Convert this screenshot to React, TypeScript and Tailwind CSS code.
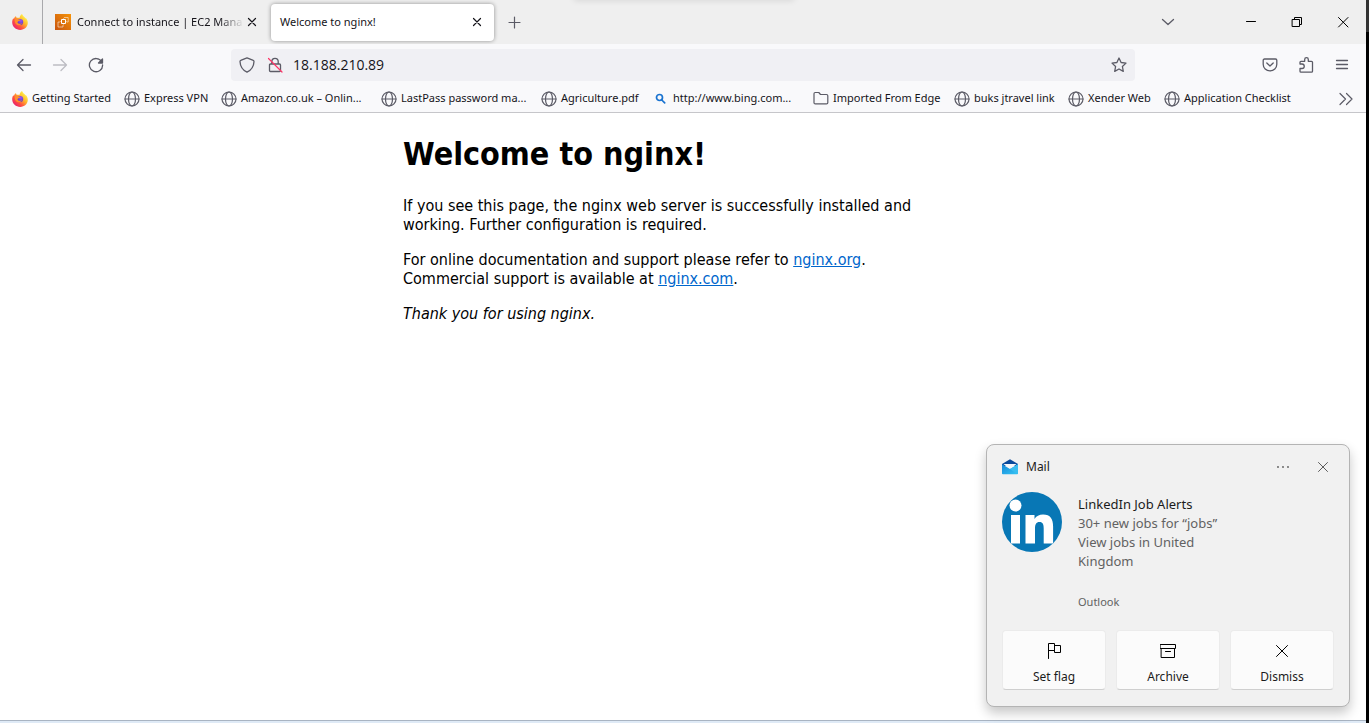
import type { ReactNode } from "react";

const UI = "font-['Noto_Sans','Open_Sans',sans-serif]";

function FirefoxLogo({ id }: { id: string }) {
  return (
    <svg viewBox="0 0 16 16" className="size-4 shrink-0" aria-hidden="true">
      <defs>
        <linearGradient id={`${id}-body`} x1="0.9" y1="0.1" x2="0.15" y2="0.9">
          <stop offset="0.1" stopColor="#fff04a" />
          <stop offset="0.4" stopColor="#ffb52a" />
          <stop offset="0.7" stopColor="#ff5240" />
          <stop offset="1" stopColor="#e9206f" />
        </linearGradient>
        <radialGradient id={`${id}-core`} cx="0.6" cy="0.3" r="0.8">
          <stop offset="0" stopColor="#9b54f5" />
          <stop offset="1" stopColor="#4a35b5" />
        </radialGradient>
      </defs>
      <path
        d="M10 0c.6 1 1 2 2.300 3 .7.5 1 1 1.200 1.500l.4-.6c1.300 1.700 2 3.400 1.900 5.200C15.600 13 12.300 16 8.200 16 3.900 16 .3 12.800.2 8.600.1 7 .5 5.200 1.500 3.900c0 .5.100.8.300 1.100C2.200 3.700 3 2.700 4 2c0 .8.2 1.300.7 1.800.9-.2 1.800-.1 2.700.3C7.700 2.600 8.600 1 10 0Z"
        fill={`url(#${id}-body)`}
      />
      <circle cx="8.100" cy="8" r="3.100" fill={`url(#${id}-core)`} />
      <path
        d="M2.800 5.600c1.200-.7 2.700-.6 3.700-.2l1.800.6c-.1.800-1 .9-2 1.200-.6.300-.4 1-.9 1.300.9 1.600 3.200 1.800 5 .5-1 2.500-4.800 2.900-6.500.9C2.900 8.800 2.500 7.300 2.800 5.600Z"
        fill="#ff8f2c"
      />
    </svg>
  );
}

function Ec2Logo() {
  return (
    <svg viewBox="0 0 16 16" className="size-4 shrink-0" aria-hidden="true">
      <defs>
        <linearGradient id="ec2" x1="0" y1="1" x2="1" y2="0">
          <stop offset="0" stopColor="#c85510" />
          <stop offset="1" stopColor="#f59308" />
        </linearGradient>
      </defs>
      <path d="M0 0h16v16H0z" fill="url(#ec2)" />
      <path d="M6.500 5.500h4v4h-4z" fill="none" stroke="#fff" strokeWidth="1" />
      <path
        d="M8.500 4.300v1.200M10.500 7.500h1.200M8.500 9.500v1.200M5.300 7.500h1.200M5 8H3v5h5v-2M9 3.500h4.200V8h-1.500"
        fill="none"
        stroke="#fff"
        strokeOpacity=".75"
        strokeWidth=".7"
      />
    </svg>
  );
}

function Line({
  children,
  color = "text-[#5b5b66]",
  width = 1.3,
}: {
  children: ReactNode;
  color?: string;
  width?: number;
}) {
  return (
    <svg
      viewBox="0 0 16 16"
      className={`size-4 ${color} shrink-0`}
      fill="none"
      stroke="currentColor"
      strokeWidth={width}
      strokeLinecap="round"
      strokeLinejoin="round"
      aria-hidden="true"
    >
      {children}
    </svg>
  );
}

function Globe() {
  return (
    <Line width={1.2}>
      <circle cx="8" cy="8" r="7" />
      <ellipse cx="8" cy="8" rx="3.500" ry="7" />
      <path d="M1 8h14" />
    </Line>
  );
}

function Folder() {
  return (
    <Line width={1.2}>
      <path d="M1 2.700c0-.8.500-1.200 1.200-1.200h3.600l1.700 2h6c.9 0 1.300.5 1.300 1.200v7c0 .8-.5 1.200-1.300 1.200H2.300C1.500 12.900 1 12.500 1 11.700Z" />
    </Line>
  );
}

function Search() {
  return (
    <Line color="text-[#1a73d0]" width={1.7}>
      <circle cx="6.500" cy="6.500" r="3" />
      <path d="m8.800 9 2.900 2.900" />
    </Line>
  );
}

const bookmarks: { label: string; icon: ReactNode; width: string }[] = [
  { label: "Getting Started", icon: <FirefoxLogo id="bm" />, width: "w-28" },
  { label: "Express VPN", icon: <Globe />, width: "w-[97px]" },
  { label: "Amazon.co.uk – Onlin...", icon: <Globe />, width: "w-40" },
  { label: "LastPass password ma...", icon: <Globe />, width: "w-40" },
  { label: "Agriculture.pdf", icon: <Globe />, width: "w-28" },
  { label: "http://www.bing.com...", icon: <Search />, width: "w-40" },
  { label: "Imported From Edge", icon: <Folder />, width: "w-[141px]" },
  { label: "buks jtravel link", icon: <Globe />, width: "w-[114px]" },
  { label: "Xender Web", icon: <Globe />, width: "w-24" },
  { label: "Application Checklist", icon: <Globe />, width: "w-36" },
];

function TabBar() {
  return (
    <div className="relative flex h-11 items-center overflow-hidden bg-[#efefef] text-[11px] text-[#15141a]">
      <div className="absolute -top-1 left-[42%] h-1 w-[220px] shadow-[0_0_6px_rgba(0,0,0,0.15)]" />
      <button className="flex h-11 w-[43px] items-center border-r border-[#a9a9ac] pl-3" aria-label="Firefox View">
        <FirefoxLogo id="view" />
      </button>
      <div className="flex w-[228px] items-center pl-3">
        <Ec2Logo />
        <button className="ml-1.5 w-[167px] mask-r-from-85% text-left whitespace-nowrap">
          Connect to instance | EC2 Mana
        </button>
        <button aria-label="Close tab">
          <Line color="text-[#15141a]" width={1.2}>
            <path d="m4.500 4.500 7 7M11.500 4.500l-7 7" />
          </Line>
        </button>
      </div>
      <div className="flex h-[37px] w-[223px] items-center justify-between rounded bg-white pr-[9px] pl-[9px] shadow-[0_0_4px_rgba(0,0,0,0.4)]">
        <button>Welcome to nginx!</button>
        <button aria-label="Close current tab">
          <Line color="text-[#15141a]" width={1.2}>
            <path d="m4.500 4.500 7 7M11.500 4.500l-7 7" />
          </Line>
        </button>
      </div>
      <button className="ml-3" aria-label="New tab">
        <Line width={1.2}>
          <path d="M8.500 3v11M3 8.500h11" />
        </Line>
      </button>
      <div className="ml-auto flex items-center pr-[15px]">
        <button className="mr-[67px]" aria-label="List all tabs">
          <Line width={1.300}>
            <path d="m2.500 5.500 5.500 5 5.500-5" />
          </Line>
        </button>
        <div className="flex items-center gap-[30px]">
          <button aria-label="Minimize">
            <Line color="text-black" width={1}>
              <path d="M3.500 7.500h9" />
            </Line>
          </button>
          <button aria-label="Restore">
            <Line color="text-black" width={1}>
              <path d="M3.500 5.500h7v7h-7zM5.500 5.500v-2h7v7h-2" />
            </Line>
          </button>
          <button aria-label="Close window">
            <Line color="text-black" width={1}>
              <path d="m3.500 3.500 9.500 9.500M13 3.500 3.500 13" />
            </Line>
          </button>
        </div>
      </div>
    </div>
  );
}

function NavBar() {
  return (
    <div className="flex h-[41px] items-center bg-[#f9f9fb]">
      <div className="flex w-[231px] gap-5 pl-4">
        <button aria-label="Back">
          <Line>
            <path d="M14.500 8H1.500M7 2.500 1.500 8 7 13.500" />
          </Line>
        </button>
        <button aria-label="Forward">
          <Line color="text-[#bdbdc3]">
            <path d="M1.500 8h13M9 2.500 14.500 8 9 13.500" />
          </Line>
        </button>
        <button aria-label="Reload">
          <Line>
            <path d="M13.700 4.800A6.600 6.600 0 1 0 14.600 8" />
            <path d="M14.500 2v4h-4z" fill="currentColor" />
          </Line>
        </button>
      </div>
      <div className="flex h-8 flex-1 items-center rounded bg-[#f0f0f4] px-2">
        <button aria-label="Tracking protection">
          <Line>
            <path d="M8 .9 14.300 3.300c.6.2.7.6.7 1.200C14.800 9.500 12.500 13 8 15.200 3.500 13 1.200 9.500 1 4.500c0-.6.1-1 .7-1.200Z" />
          </Line>
        </button>
        <button className="ml-3" aria-label="Connection is not secure">
          <Line>
            <path d="M3.500 7h9c.7 0 1 .4 1 1v5.500c0 .7-.3 1-1 1h-9c-.7 0-1-.3-1-1V8c0-.6.3-1 1-1ZM4.800 7V4.500a3.200 3.200 0 0 1 6.400 0V7" />
            <path d="m1.500 1.500 13.500 13.500" stroke="#ff3366" strokeWidth="1.200" />
          </Line>
        </button>
        <input
          aria-label="Address"
          defaultValue="18.188.210.89"
          className="ml-2.5 min-w-0 flex-1 bg-transparent font-['Open_Sans','Noto_Sans',sans-serif] text-sm text-[#15141a] outline-none"
        />
        <button aria-label="Bookmark this page">
          <Line>
            <path d="m8 1 2.100 4.500 4.900.6-3.600 3.400.9 4.900L8 12l-4.300 2.400.9-4.900L1 6.100l4.900-.6Z" />
          </Line>
        </button>
      </div>
      <div className="flex w-[231px] justify-end gap-5 pr-4">
        <button aria-label="Save to Pocket">
          <Line>
            <path d="M2.500 2h11c.8 0 1.300.5 1.300 1.300V7.200c0 3.800-3 6.600-6.800 6.600S1.200 11 1.200 7.200V3.300C1.200 2.500 1.700 2 2.500 2Z" />
            <path d="M4.800 6 8 9l3.200-3" />
          </Line>
        </button>
        <button aria-label="Extensions">
          <Line>
            <path d="M2 7V5.300c0-.6.4-1 1-1h3.700V2.500a1.800 1.800 0 0 1 3.600 0v1.800h3.200c.6 0 1 .4 1 1v8.900c0 .6-.4 1-1 1H3c-.6 0-1-.4-1-1v-2.700h2a2.200 2.200 0 0 0 0-4.500Z" />
          </Line>
        </button>
        <button aria-label="Application menu">
          <Line>
            <path d="M2.500 3.500h11M2.500 7.500h11M2.500 11.500h11" />
          </Line>
        </button>
      </div>
    </div>
  );
}

function BookmarksBar() {
  return (
    <nav className="flex h-7 items-center border-b border-[#c6c6ca] bg-[#f9f9fb] pl-3 text-[11px] text-[#15141a]">
      {bookmarks.map((b) => (
        <a key={b.label} href="#" className={`flex ${b.width} shrink-0 items-center gap-1 whitespace-nowrap`}>
          {b.icon}
          <span>{b.label}</span>
        </a>
      ))}
      <button className="mr-3 ml-auto" aria-label="More bookmarks">
        <Line width={1.200}>
          <path d="m2 2.500 5.500 5.500L2 13.500M8.500 2.500 14 8l-5.500 5.500" />
        </Line>
      </button>
    </nav>
  );
}

function Action({ label, children }: { label: string; children: ReactNode }) {
  return (
    <button className="flex h-[60px] flex-1 flex-col items-center gap-2 rounded border border-b-[#cfcfcf] border-[#ebebeb] bg-[#fbfbfb] pt-3 text-xs leading-5 text-[#1b1b1b]">
      {children}
      <span>{label}</span>
    </button>
  );
}

function MailToast() {
  return (
    <section
      aria-label="Mail notification"
      className="absolute right-4 bottom-4 w-[364px] rounded-lg border border-[#b4b4b4] bg-[#f1f1f1] px-[15px] pt-3.5 pb-4 shadow-[0_6px_12px_rgba(0,0,0,0.22)]"
    >
      <header className="flex h-4 items-center text-xs text-[#1b1b1b]">
        <svg viewBox="0 0 16 16" className="size-4" aria-hidden="true">
          <defs>
            <linearGradient id="mail" x1="0" y1="0" x2="1" y2="1">
              <stop offset="0" stopColor="#1688d8" />
              <stop offset="1" stopColor="#35c5f4" />
            </linearGradient>
          </defs>
          <path d="M0 5 8 .3 16 5v2H0z" fill="#0a4a9c" />
          <path d="M1.500 5h13L8 10.500z" fill="#f6f8fb" />
          <path d="M0 5.200 8 10l8-4.800V14.500c0 .5-.3.800-.8.800H.8c-.5 0-.8-.3-.8-.8Z" fill="url(#mail)" />
          <path d="m8 10 8-4.800V14.500L15 15Z" fill="#39bdf0" />
        </svg>
        <h2 className="ml-2">Mail</h2>
        <button className="ml-auto" aria-label="More options">
          <svg viewBox="0 0 16 16" className="size-4" fill="#5c5c5c" aria-hidden="true">
            <circle cx="3" cy="8" r=".9" />
            <circle cx="8" cy="8" r=".9" />
            <circle cx="13" cy="8" r=".9" />
          </svg>
        </button>
        <button className="mr-[3px] ml-6" aria-label="Close notification">
          <Line color="text-[#5c5c5c]" width={1}>
            <path d="m3.500 3.500 9 9M12.500 3.500l-9 9" />
          </Line>
        </button>
      </header>
      <div className="mt-[17px] flex gap-4">
        <svg viewBox="0 0 60 60" className="size-[60px]" role="img" aria-label="LinkedIn">
          <circle cx="30" cy="30" r="30" fill="#0877b5" />
          <g fill="#fff">
            <circle cx="13.500" cy="13.500" r="6" />
            <path d="M9 23h9v28.500H9zM23.500 23h9v4c1.600-3 4.700-4.600 8.600-4.600 7.400 0 10 4.600 10 12V51.500h-9.400V36.500c0-4-.8-6.500-4.200-6.500s-4.500 2.600-4.500 6.500v15h-9.500z" />
          </g>
        </svg>
        <div className="w-40 pt-[3px] text-[13px] leading-[19px] text-[#626262]">
          <h3 className="text-[#1b1b1b]">LinkedIn Job Alerts</h3>
          <p>30+ new jobs for “jobs”</p>
          <p>View jobs in United Kingdom</p>
          <p className="mt-[21px] text-[11px]">Outlook</p>
        </div>
      </div>
      <div className="mt-[19px] flex gap-2.5">
        <Action label="Set flag">
          <Line color="text-black" width={1}>
            <path d="M2.500 15.500v-15h6v7h-6M8.500 2.500h6v7h-6v-2" strokeLinejoin="miter" />
          </Line>
        </Action>
        <Action label="Archive">
          <Line color="text-black" width={1}>
            <path d="M.5 1.500h15v4H.5zM1.500 5.500h13v9h-13zM5.500 8.500h5" strokeLinejoin="miter" />
          </Line>
        </Action>
        <Action label="Dismiss">
          <Line color="text-black" width={1}>
            <path d="m2.500 2.500 11 11M13.500 2.500l-11 11" />
          </Line>
        </Action>
      </div>
    </section>
  );
}

export default function App() {
  return (
    <div className={`flex min-h-screen bg-white ${UI}`}>
      <div className="relative flex min-w-0 flex-1 flex-col">
        <TabBar />
        <NavBar />
        <BookmarksBar />
        <main className="mx-auto w-[560px] flex-1 font-['DejaVu_Sans_Condensed','DejaVu_Sans',sans-serif] text-base leading-[19px] text-black">
          <h1 className="my-[22px] text-[32px] leading-[39px] font-bold">Welcome to nginx!</h1>
          <p className="my-4">
            If you see this page, the nginx web server is successfully installed and working. Further configuration is
            required.
          </p>
          <p className="my-4">
            For online documentation and support please refer to{" "}
            <a href="http://nginx.org/" className="text-[#0066cc] underline">nginx.org</a>.
            <br />
            Commercial support is available at{" "}
            <a href="http://nginx.com/" className="text-[#0066cc] underline">nginx.com</a>.
          </p>
          <p className="my-4">
            <em>Thank you for using nginx.</em>
          </p>
        </main>
        <div className="h-[3px] border-t border-[#a9b4c2] bg-[#dfeaf6]" />
        <MailToast />
      </div>
      <div className="flex w-[3px] flex-col bg-black">
        <div className="h-8 bg-[#333]" />
      </div>
    </div>
  );
}
